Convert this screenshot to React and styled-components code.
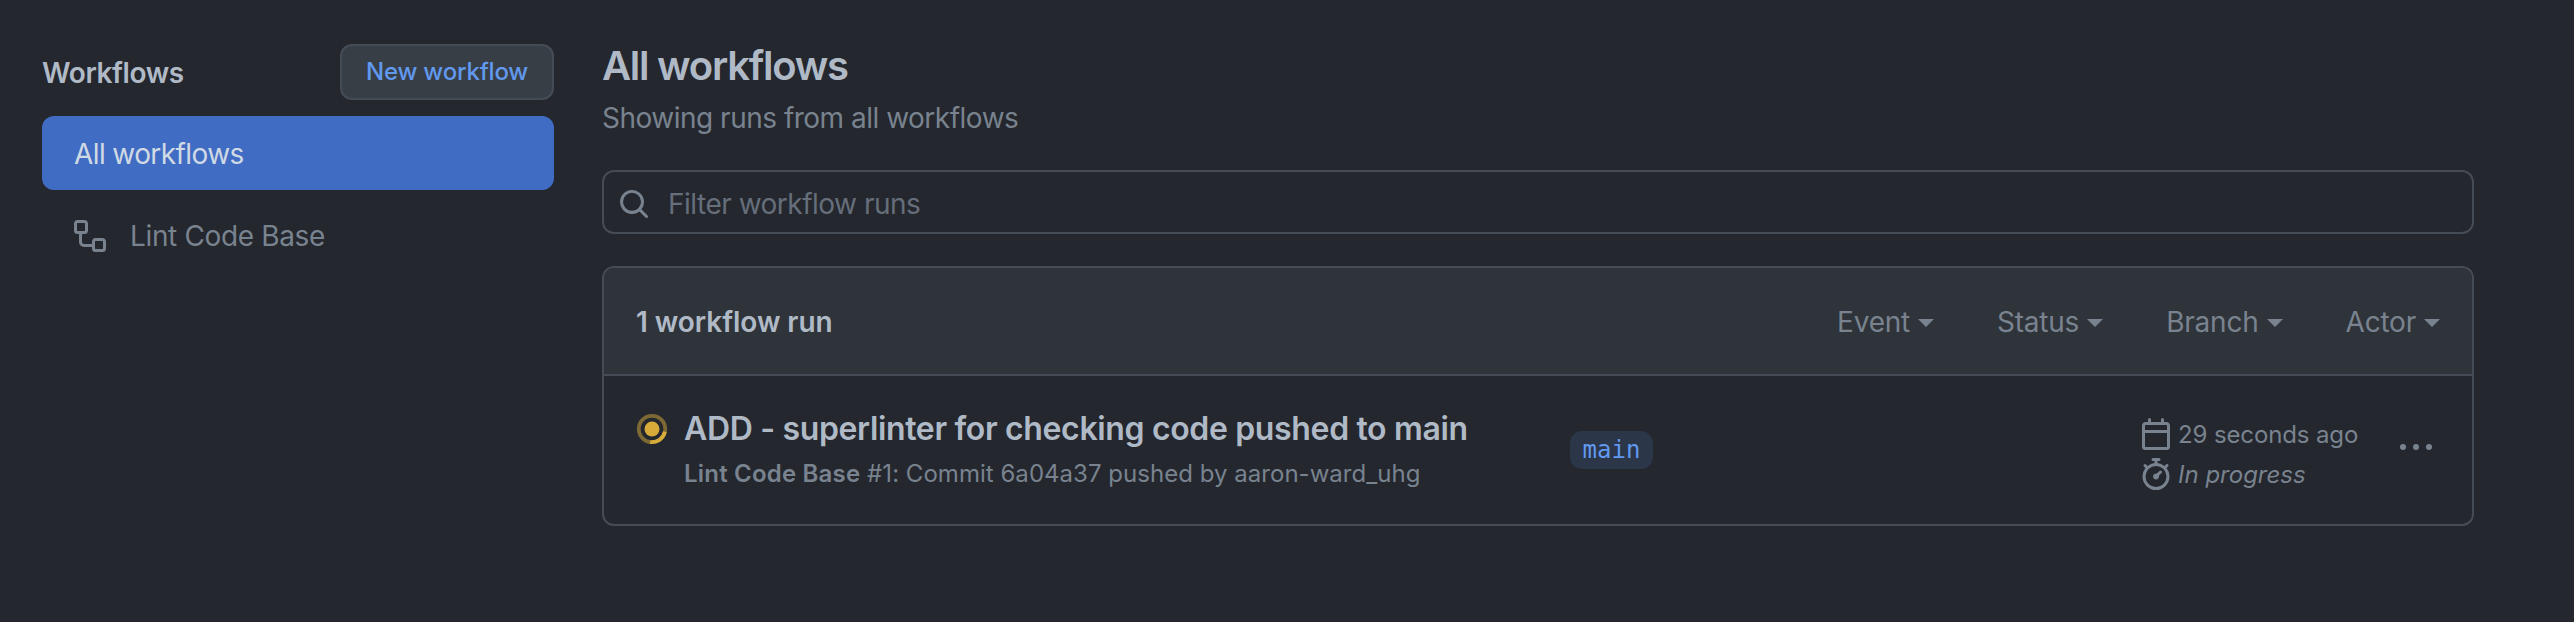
import React from "react";
import styled, { createGlobalStyle } from "styled-components";

const c = {
  bg: "#24272e", panel: "#2f333a", border: "#464c55", text: "#b0bac6",
  muted: "#79838f", subtle: "#656e7a", accent: "#6199ef", active: "#416cc3",
  button: "#383e45", badge: "#2b3648", yellow: "#d6ab3a",
};

const Global = createGlobalStyle`
  * { box-sizing: border-box; }
  body { margin: 0; background: ${c.bg}; }
`;

const Page = styled.div`
  display: flex;
  gap: 48px;
  height: 622px;
  padding: 44px 100px 0 42px;
  background: ${c.bg};
  color: ${c.text};
  font-family: Inter, "Liberation Sans", sans-serif;
  font-size: 28px;
  line-height: 42px;
  white-space: nowrap;
`;
const Text = styled.span`
  letter-spacing: ${(p) => p.$track || 0}px;
`;
const Sidebar = styled.nav`
  width: 512px;
  flex: none;
`;
const SidebarHead = styled.div`
  display: flex;
  align-items: center;
  justify-content: space-between;
  height: 56px;
  margin-bottom: 16px;
  font-weight: 600;
  > span { padding-top: 2px; }
`;
const NewButton = styled.button`
  width: 214px;
  height: 56px;
  padding: 0;
  border: 2px solid ${c.border};
  border-radius: 12px;
  background: ${c.button};
  color: ${c.accent};
  font: 500 24px/40px Inter, sans-serif;
`;
const NavItem = styled.div`
  display: flex;
  align-items: center;
  gap: 24px;
  height: 74px;
  margin-bottom: 9px;
  padding: ${(p) => (p.$active ? 2 : 0)}px 32px 0;
  border-radius: 12px;
  background: ${(p) => (p.$active ? c.active : "transparent")};
  color: ${(p) => (p.$active ? "#d0dae4" : c.muted)};
`;
const Main = styled.main`
  flex: 1;
  min-width: 0;
`;
const Title = styled.h1`
  margin: 0;
  font-size: 40px;
  font-weight: 600;
  line-height: 44px;
`;
const Subtitle = styled.p`
  margin: 9px 0 31px;
  color: ${c.muted};
`;
const Search = styled.div`
  display: flex;
  align-items: center;
  gap: 18px;
  height: 64px;
  margin-bottom: 32px;
  padding: 3px 16px 0 14px;
  border: 2px solid ${c.border};
  border-radius: 12px;
  color: ${c.subtle};
`;
const Panel = styled.section`
  height: 260px;
  border: 2px solid ${c.border};
  border-radius: 12px;
  overflow: hidden;
`;
const PanelHead = styled.header`
  display: flex;
  align-items: center;
  justify-content: space-between;
  height: 108px;
  padding: 2px 32px 0 32px;
  border-bottom: 2px solid ${c.border};
  background: ${c.panel};
  font-weight: 600;
`;
const Filters = styled.div`
  display: flex;
  gap: 63px;
  color: ${c.muted};
  font-weight: 400;
`;
const Filter = styled.div`
  display: flex;
  align-items: center;
  gap: 8px;
`;
const Caret = styled.i`
  margin-top: 2px;
  border: 8px solid transparent;
  border-top-color: currentColor;
  border-bottom: 0;
`;
const Row = styled.div`
  display: grid;
  grid-template-columns: 48px 886px 1fr 260px 40px;
  height: 148px;
  padding: 0 32px;
`;
const StatusCell = styled.div`
  padding-top: 37px;
`;
const RunInfo = styled.div`
  padding-top: 33px;
`;
const RunTitle = styled.div`
  color: ${c.text};
  font-size: 32px;
  font-weight: 600;
  line-height: 40px;
`;
const RunMeta = styled.div`
  margin-top: 7px;
  color: ${c.muted};
  font-size: 24px;
  line-height: 36px;
  b { font-weight: 600; letter-spacing: 0.2px; }
`;
const Badge = styled.span`
  justify-self: start;
  width: 83px;
  height: 38px;
  margin-top: 55px;
  border-radius: 12px;
  background: ${c.badge};
  color: ${c.accent};
  font: 24px/38px "DejaVu Sans Mono", monospace;
  text-align: center;
`;
const Times = styled.div`
  padding-top: 38px;
  color: ${c.muted};
  font-size: 24px;
`;
const TimeLine = styled.div`
  display: flex;
  align-items: center;
  gap: 6px;
  height: 40px;
  line-height: 36px;
  font-style: ${(p) => (p.$italic ? "italic" : "normal")};
  > span { padding-top: 2px; }
`;
const Menu = styled.div`
  padding-top: 55px;
`;
const Svg = styled.svg`
  display: block;
  flex: none;
  width: 32px;
  height: 32px;
  fill: ${(p) => p.$color || c.muted};
`;

const paths = {
  workflow: "M0 1.75C0 .784.784 0 1.75 0h3.5C6.216 0 7 .784 7 1.75v3.5A1.75 1.75 0 0 1 5.25 7H4v4a1 1 0 0 0 1 1h4v-1.25C9 9.784 9.784 9 10.75 9h3.5c.966 0 1.75.784 1.75 1.75v3.5A1.75 1.75 0 0 1 14.25 16h-3.5A1.75 1.75 0 0 1 9 14.25v-.75H5A2.5 2.5 0 0 1 2.5 11V7h-.75A1.75 1.75 0 0 1 0 5.25Zm1.75-.25a.25.25 0 0 0-.25.25v3.5c0 .138.112.25.25.25h3.5a.25.25 0 0 0 .25-.25v-3.5a.25.25 0 0 0-.25-.25Zm9 9a.25.25 0 0 0-.25.25v3.5c0 .138.112.25.25.25h3.5a.25.25 0 0 0 .25-.25v-3.5a.25.25 0 0 0-.25-.25Z",
  search: "M10.68 11.74a6 6 0 0 1-7.922-8.982 6 6 0 0 1 8.982 7.922l3.04 3.04a.749.749 0 0 1-.326 1.275.749.749 0 0 1-.734-.215ZM11.5 7a4.499 4.499 0 1 0-8.997 0A4.499 4.499 0 0 0 11.5 7Z",
  calendar: "M4.75 0a.75.75 0 0 1 .75.75V2h5V.75a.75.75 0 0 1 1.5 0V2h1.25c.966 0 1.75.784 1.75 1.75v10.5A1.75 1.75 0 0 1 13.25 16H2.75A1.75 1.75 0 0 1 1 14.25V3.75C1 2.784 1.784 2 2.75 2H4V.75A.75.75 0 0 1 4.75 0ZM2.5 7.5v6.75c0 .138.112.25.25.25h10.5a.25.25 0 0 0 .25-.25V7.5Zm10.75-4H2.75a.25.25 0 0 0-.25.25V6h11V3.75a.25.25 0 0 0-.25-.25Z",
  stopwatch: "M5.75.75A.75.75 0 0 1 6.5 0h3a.75.75 0 0 1 0 1.5h-.75v1l-.001.041a6.724 6.724 0 0 1 3.464 1.435l.007-.006.75-.75a.749.749 0 0 1 1.275.326.749.749 0 0 1-.215.734l-.75.75-.006.007a6.75 6.75 0 1 1-10.548 0L2.72 5.03l-.75-.75a.751.751 0 0 1 .018-1.042.751.751 0 0 1 1.042-.018l.75.75.007.006A6.72 6.72 0 0 1 7.25 2.541V1.5H6.5a.75.75 0 0 1-.75-.75ZM8 14.5a5.25 5.25 0 1 0-.001-10.501A5.25 5.25 0 0 0 8 14.5Zm.389-6.7 1.33-1.33a.75.75 0 1 1 1.061 1.06L9.45 8.861A1.503 1.503 0 0 1 8 10.75a1.499 1.499 0 1 1 .389-2.95Z",
};
const Icon = ({ name }) => (
  <Svg viewBox="0 0 16 16"><path fillRule="evenodd" d={paths[name]} /></Svg>
);

const filters = ["Event", "Status", "Branch", "Actor"];

export default function App() {
  return (
    <Page>
      <Global />
      <Sidebar>
        <SidebarHead>
          <Text $track={-0.4}>Workflows</Text>
          <NewButton><Text $track={-0.2}>New workflow</Text></NewButton>
        </SidebarHead>
        <NavItem $active><Text $track={-0.6}>All workflows</Text></NavItem>
        <NavItem><Icon name="workflow" /><Text $track={-0.35}>Lint Code Base</Text></NavItem>
      </Sidebar>
      <Main>
        <Title><Text $track={-1.25}>All workflows</Text></Title>
        <Subtitle><Text $track={-0.5}>Showing runs from all workflows</Text></Subtitle>
        <Search><Icon name="search" /><Text $track={-0.5}>Filter workflow runs</Text></Search>
        <Panel>
          <PanelHead>
            <Text $track={-0.05}>1 workflow run</Text>
            <Filters>
              {filters.map((label) => (
                <Filter key={label}><Text $track={-0.22}>{label}</Text><Caret /></Filter>
              ))}
            </Filters>
          </PanelHead>
          <Row>
            <StatusCell>
              <Svg viewBox="0 0 16 16" $color={c.yellow}>
                <circle cx="8" cy="8" r="6.6" fill="none" stroke={c.yellow} strokeOpacity="0.5" strokeWidth="1.9" />
                <path d="M14.45 9.3A6.6 6.6 0 0 1 7.1 14.54" fill="none" stroke={c.yellow} strokeWidth="1.9" />
                <circle cx="8" cy="8" r="3.75" />
              </Svg>
            </StatusCell>
            <RunInfo>
              <RunTitle><Text $track={-0.35}>ADD - superlinter for checking code pushed to main</Text></RunTitle>
              <RunMeta><Text $track={0.03}><b>Lint Code Base</b> #1: Commit 6a04a37 pushed by aaron-ward_uhg</Text></RunMeta>
            </RunInfo>
            <Badge>main</Badge>
            <Times>
              <TimeLine><Icon name="calendar" /><Text $track={-0.12}>29 seconds ago</Text></TimeLine>
              <TimeLine $italic><Icon name="stopwatch" /><Text>In progress</Text></TimeLine>
            </Times>
            <Menu>
              <Svg viewBox="0 0 32 32">
                <circle cx="3" cy="16" r="3" /><circle cx="16" cy="16" r="3" /><circle cx="29" cy="16" r="3" />
              </Svg>
            </Menu>
          </Row>
        </Panel>
      </Main>
    </Page>
  );
}
